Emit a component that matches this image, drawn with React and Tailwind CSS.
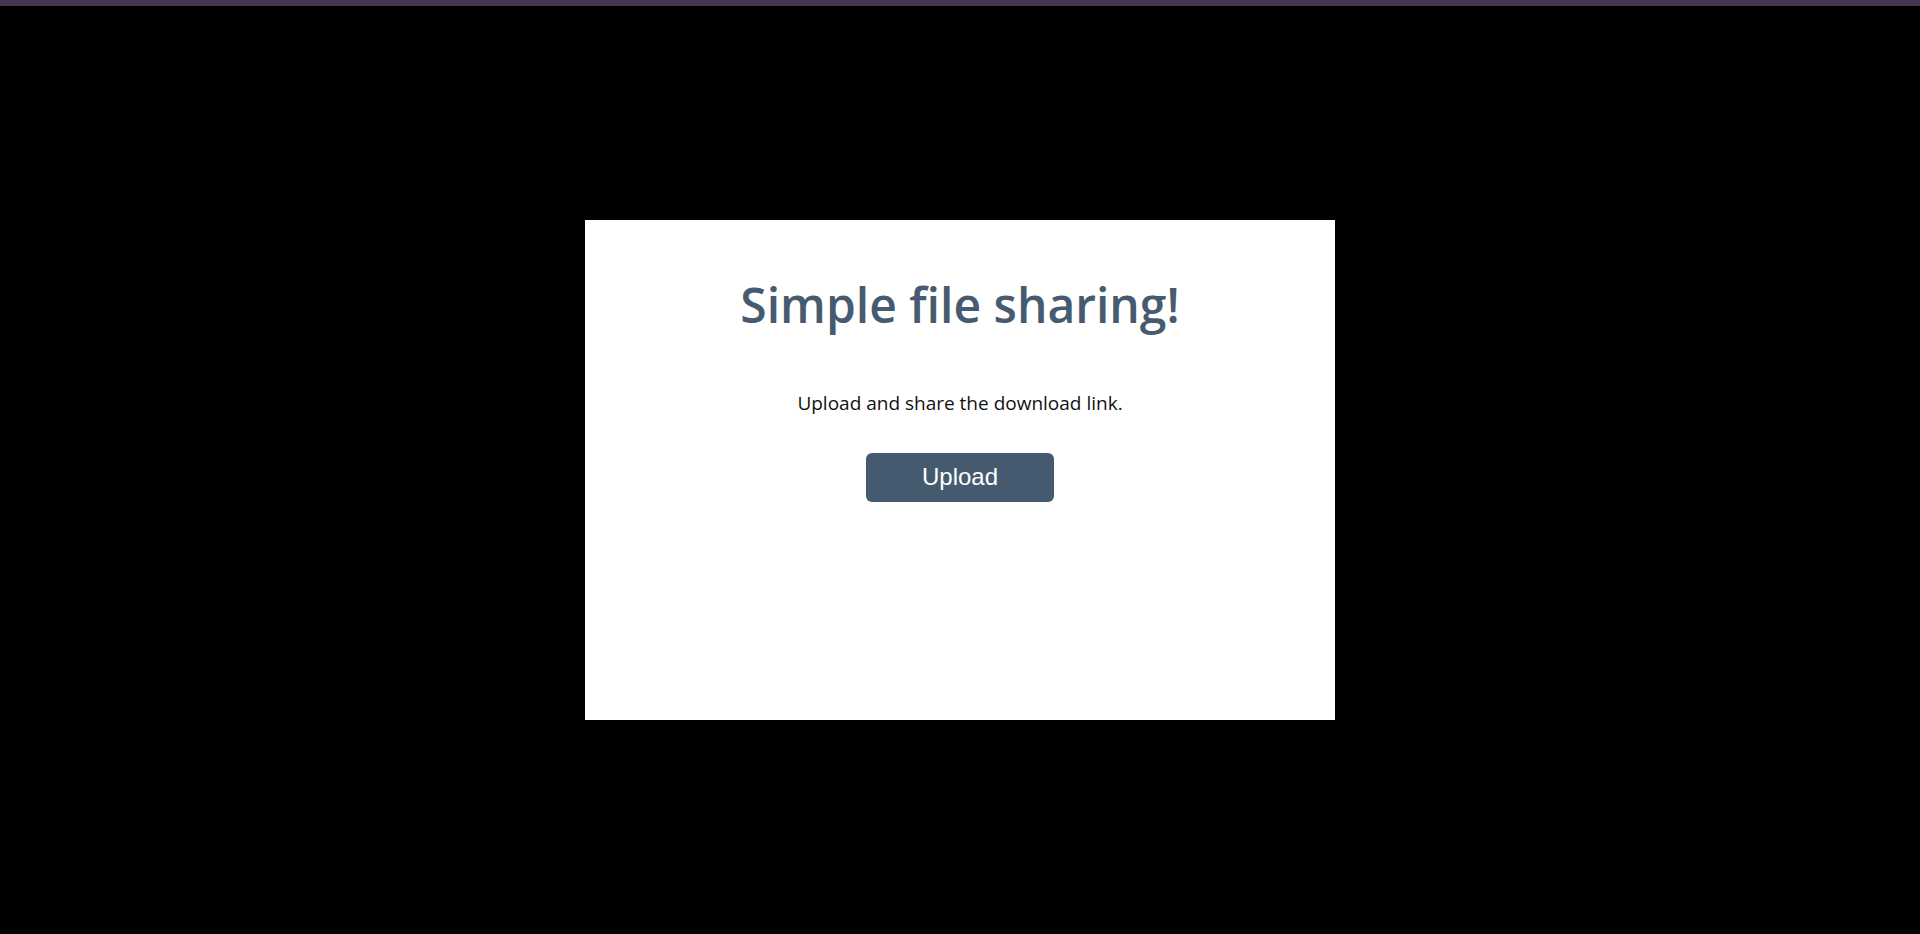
export default function App() {
  return (
    <div className="flex min-h-screen flex-col bg-black">
      <div className="h-[6px] bg-[#43384f]" />
      <main className="flex flex-1 items-center justify-center">
        <div className="flex h-[500px] w-[750px] flex-col items-center bg-white pt-[55px] font-['Open_Sans',sans-serif]">
          <h1 className="text-[48px] font-semibold leading-tight text-[#465b70]">Simple file sharing!</h1>
          <p className="mt-[54px] text-[19px] text-[#111]">Upload and share the download link.</p>
          <button className="mt-[35px] h-[49px] w-[188px] rounded-[6px] border-0 bg-[#465a6f] font-['Liberation_Sans',Arial,sans-serif] text-[24px] text-white">
            Upload
          </button>
        </div>
      </main>
    </div>
  );
}
